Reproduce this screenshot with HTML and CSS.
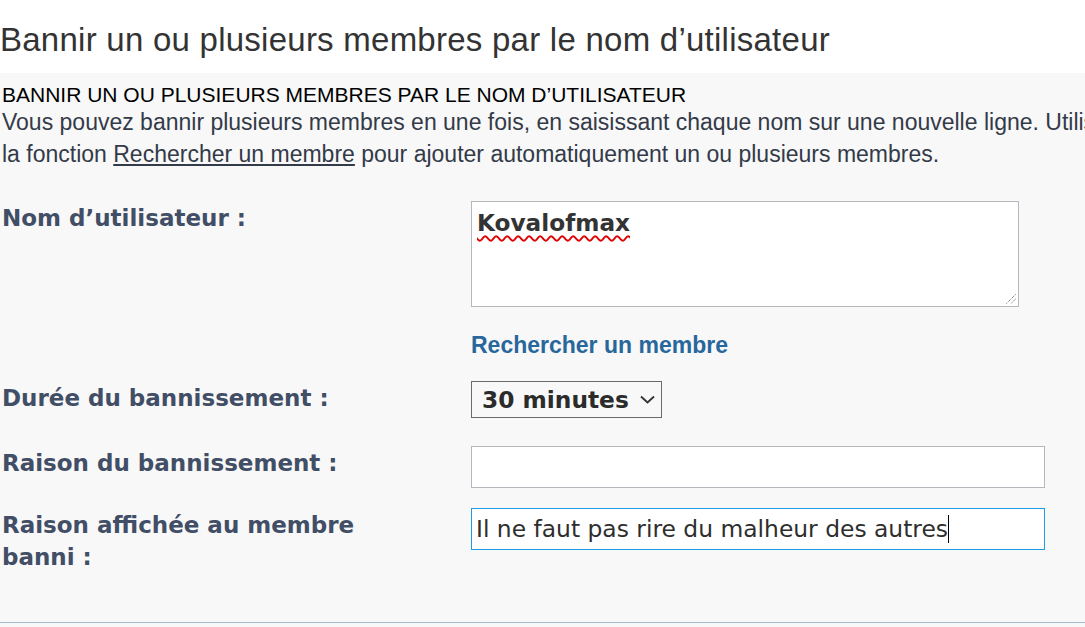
FILE: index.html
```html
<!DOCTYPE html>
<html lang="fr">
<head>
<meta charset="utf-8">
<title>Bannir des membres</title>
<link rel="stylesheet" href="styles.css">
</head>
<body>
<h1 class="page-title">Bannir un ou plusieurs membres par le nom d’utilisateur</h1>
<div class="panel">
  <div class="panel-inner">
    <h3 class="section-title">BANNIR UN OU PLUSIEURS MEMBRES PAR LE NOM D’UTILISATEUR</h3>
    <p class="explain">Vous pouvez bannir plusieurs membres en une fois, en saisissant chaque nom sur une nouvelle ligne. Utilisez la fonction <a class="plain-link" href="#">Rechercher un membre</a> pour ajouter automatiquement un ou plusieurs membres.</p>
    <div class="form">
      <div class="row">
        <label class="label">Nom d’utilisateur :</label>
        <div class="field">
          <div class="textarea"><span class="misspelled">Kovalofmax</span>
            <svg class="grip" width="10" height="10" viewBox="0 0 10 10"><path d="M9.5 0.5 L0.5 9.5 M9.5 5 L5 9.5" stroke="#555" stroke-width="1" stroke-dasharray="1 1" fill="none"/></svg>
          </div>
          <a class="search-link" href="#">Rechercher un membre</a>
        </div>
      </div>
      <div class="row row-select">
        <label class="label">Durée du bannissement :</label>
        <div class="field">
          <div class="select"><span>30 minutes</span>
            <svg class="chev" width="15" height="9" viewBox="0 0 15 9"><path d="M1 1.5 L7.5 7.5 L14 1.5" stroke="#333" stroke-width="1.8" fill="none"/></svg>
          </div>
        </div>
      </div>
      <div class="row row-input1">
        <label class="label">Raison du bannissement :</label>
        <div class="field"><div class="input"></div></div>
      </div>
      <div class="row row-input2">
        <label class="label">Raison affichée au membre banni :</label>
        <div class="field"><div class="input focused"><span>Il ne faut pas rire du malheur des autres</span><span class="caret"></span></div></div>
      </div>
    </div>
  </div>
</div>
</body>
</html>
```
FILE: styles.css
```css
html, body {
  margin: 0;
  padding: 0;
  background: #ffffff;
  overflow: hidden;
}
body {
  width: 1085px;
  height: 627px;
}
.page-title {
  margin: 0;
  padding: 22px 0 15px 0;
  font-family: "Liberation Sans", Arial, sans-serif;
  font-weight: normal;
  font-size: 33px;
  letter-spacing: 0.25px;
  line-height: 36px;
  color: #333333;
  white-space: nowrap;
}
.panel {
  background: #f8f8f8;
  height: 554px;
  width: 1085px;
  overflow: hidden;
}
.panel-inner {
  width: 1200px;
  padding: 11px 0 0 2px;
  height: 538px;
  border-bottom: 1px solid #a6b9ca;
}
.section-title {
  margin: 0;
  font-family: "Liberation Sans", Arial, sans-serif;
  font-weight: normal;
  font-size: 21px;
  line-height: 22px;
  color: #000;
  white-space: nowrap;
}
.explain {
  margin: 0;
  font-family: "Liberation Sans", Arial, sans-serif;
  font-size: 23px;
  line-height: 32px;
  color: #333a48;
  width: 1125px;
}
.plain-link {
  color: #333a48;
  text-decoration: underline;
}
.form {
  margin-top: 31px;
}
.row {
  display: grid;
  grid-template-columns: 469px 1fr;
}
.row-select { margin-top: 23px; }
.row-input1 { margin-top: 28px; }
.row-input2 { margin-top: 20px; }
.label {
  font-family: "DejaVu Sans", Verdana, sans-serif;
  font-weight: bold;
  font-size: 23px;
  line-height: 32px;
  padding-top: 1px;
  color: #414e66;
  padding-right: 100px;
}
.textarea {
  position: relative;
  box-sizing: border-box;
  width: 548px;
  height: 106px;
  background: #fff;
  border: 1px solid #b4b8bc;
  padding: 6px 5px;
  font-family: "DejaVu Sans", Verdana, sans-serif;
  font-weight: bold;
  font-size: 23.2px;
  line-height: 30px;
  color: #333;
}
.misspelled {
  text-decoration: underline wavy #e00000;
  text-decoration-thickness: 1.5px;
  text-underline-offset: 4px;
}
.grip {
  position: absolute;
  right: 2px;
  bottom: 2px;
}
.search-link {
  display: block;
  margin-top: 25px;
  font-family: "Liberation Sans", Arial, sans-serif;
  font-weight: bold;
  font-size: 23px;
  line-height: 26px;
  color: #28679c;
  text-decoration: none;
}
.select {
  box-sizing: border-box;
  width: 191px;
  height: 37px;
  border: 1px solid #6a6a6a;
  display: flex;
  align-items: center;
  gap: 11px;
  padding-left: 10px;
  font-family: "DejaVu Sans", Verdana, sans-serif;
  font-weight: bold;
  font-size: 23.3px;
  color: #2b2b2b;
}
.input {
  box-sizing: border-box;
  width: 574px;
  height: 42px;
  background: #fff;
  border: 1px solid #b4b8bc;
  display: flex;
  align-items: center;
  padding-left: 4px;
  font-family: "DejaVu Sans", Verdana, sans-serif;
  font-size: 23.4px;
  color: #2e2e2e;
}
.input.focused {
  border-color: #1e9be2;
}
.caret {
  display: inline-block;
  width: 1px;
  height: 28px;
  background: #000;
}
```
